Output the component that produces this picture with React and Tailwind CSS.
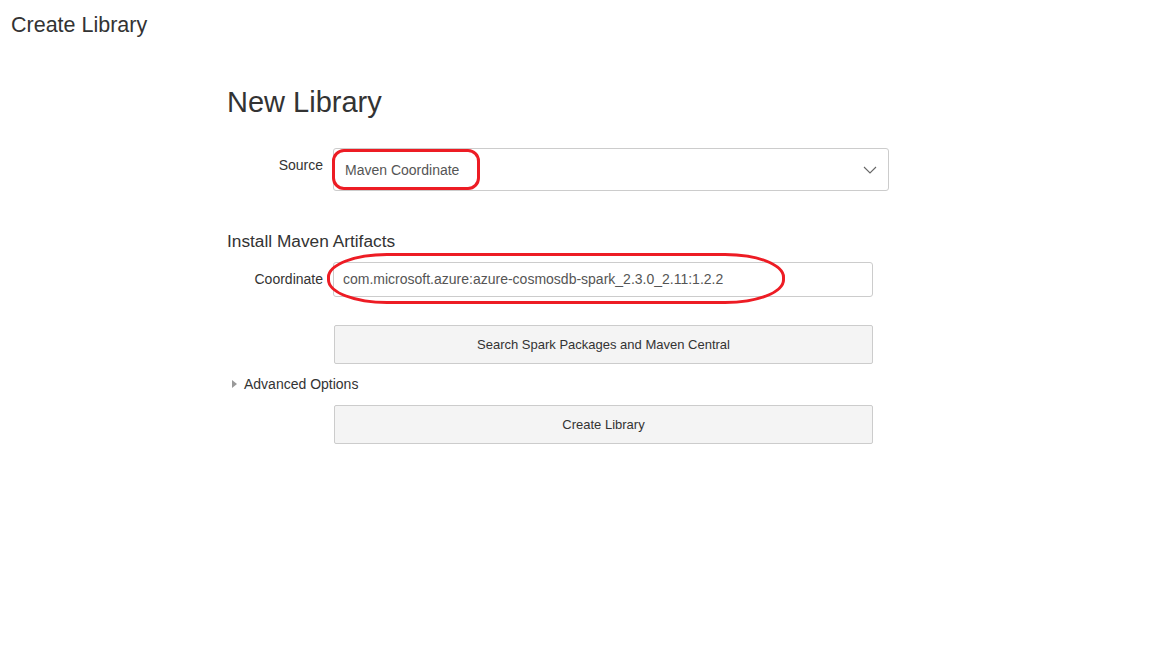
import React from "react";

export default function App() {
  return (
    <div className="w-[1152px] h-[648px] bg-white text-[#333] font-['Liberation_Sans',Arial,sans-serif]">
      <div className="pl-[11px] pt-[12px] text-[21.5px] leading-[26px]">Create Library</div>
      <div className="ml-[227px] mt-[48px] w-[662px]">
        <h1 className="text-[29px] leading-[32px]">New Library</h1>
        <div className="flex items-start mt-[30px]">
          <div className="w-[96px] text-right text-[14px] pt-[7px] text-[#333]">Source</div>
          <div className="relative ml-[10px] w-[556px] h-[43px] border border-[#ccc] rounded-[3px] flex items-center justify-between pl-[11px] pr-[10px]">
            <span className="text-[14px] text-[#555] mt-[1px]">Maven Coordinate</span>
            <svg width="14" height="8" viewBox="0 0 14 8" className="mr-[1px]">
              <path d="M1 1 L7 7 L13 1" fill="none" stroke="#666" strokeWidth="1.1" />
            </svg>
            <div className="absolute left-[-2px] top-[0px] w-[148px] h-[41px] border-[3.5px] border-[#ed1c24] rounded-[12px]" />
          </div>
        </div>
        <div className="mt-[40px] text-[17.3px] leading-[20px]">Install Maven Artifacts</div>
        <div className="flex items-center mt-[11px]">
          <div className="w-[96px] text-right text-[14px] text-[#333]">Coordinate</div>
          <div className="relative ml-[10px] w-[540px] h-[35px] border border-[#ccc] rounded-[3px] flex items-center pl-[9px]">
            <span className="text-[14px] text-[#555]">com.microsoft.azure:azure-cosmosdb-spark_2.3.0_2.11:1.2.2</span>
            <div className="absolute left-[-7px] top-[-10px] w-[458px] h-[51px] border-[3.5px] border-[#ed1c24] rounded-[60px/24px]" />
          </div>
        </div>
        <div className="ml-[107px] mt-[28px] w-[539px] h-[39px] bg-[#f4f4f4] border border-[#ccc] rounded-[2px] flex items-center justify-center text-[13px] text-[#333]">
          Search Spark Packages and Maven Central
        </div>
        <div className="flex items-center mt-[11px] h-[18px]">
          <svg width="5" height="8" viewBox="0 0 5 8" className="ml-[5px]">
            <path d="M0 0 L5 4 L0 8 Z" fill="#999" />
          </svg>
          <span className="ml-[7px] text-[14px] text-[#333]">Advanced Options</span>
        </div>
        <div className="ml-[107px] mt-[12px] w-[539px] h-[39px] bg-[#f4f4f4] border border-[#ccc] rounded-[2px] flex items-center justify-center text-[13px] text-[#333]">
          Create Library
        </div>
      </div>
    </div>
  );
}
